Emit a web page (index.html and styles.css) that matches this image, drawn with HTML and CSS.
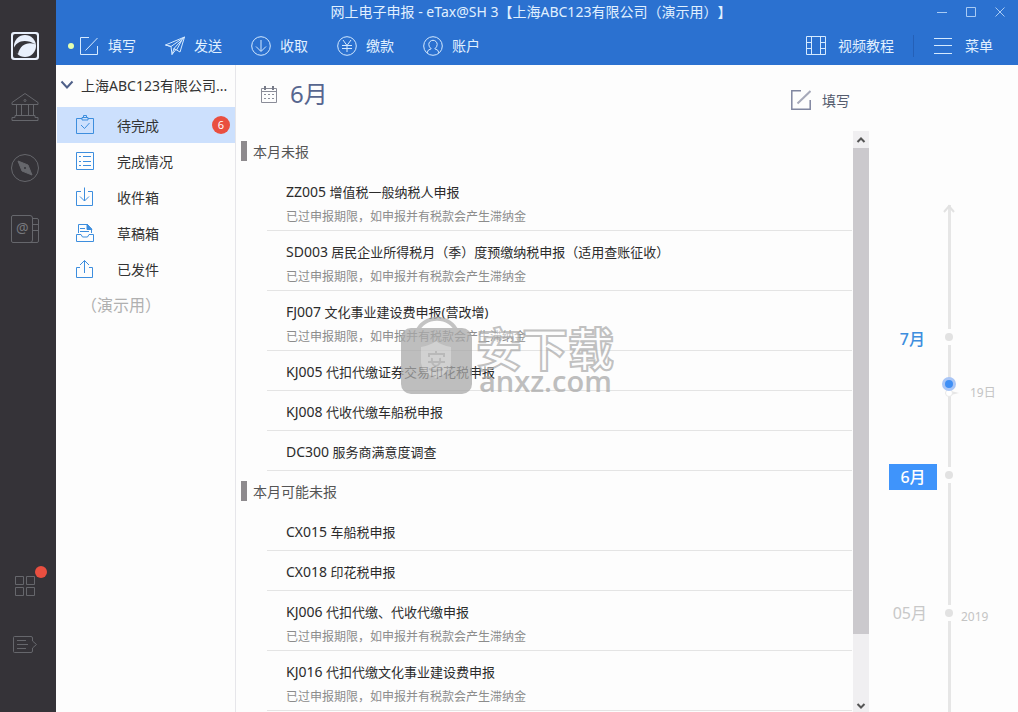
FILE: index.html
```html
<!DOCTYPE html>
<html lang="zh-CN">
<head>
<meta charset="utf-8">
<title>网上电子申报 - eTax@SH 3</title>
<link rel="stylesheet" href="styles.css">
</head>
<body>
<div class="app">
  <nav class="rail" aria-label="主导航">
    <button class="rail-btn" aria-label="首页"><svg width="28" height="28" viewBox="0 0 28 28"><rect width="28" height="28" rx="3" fill="#e9f0fc"/><rect x="2" y="2" width="24" height="24" rx="2" fill="#35343a"/><circle cx="14" cy="14" r="11" fill="#e9f0fc"/><path d="M2.500 17C5 9 14 6 25 12.500C17 9.500 9.500 12 7 22C5 21 4 20 2.500 17Z" fill="#35343a"/></svg></button>
    <button class="rail-btn" aria-label="税务局"><svg class="line" width="28" height="28" viewBox="0 0 28 28"><path d="M1 9.500L14 .5L27 9.500V11.500H1ZM5.500 12V22M10.500 12V22M17.500 12V22M22.500 12V22M4 22.500H24V24.500H27V27.500H1V24.500H4Z"/><circle cx="14" cy="7.500" r="1"/></svg></button>
    <button class="rail-btn" aria-label="指南"><svg class="line" width="28" height="28" viewBox="0 0 28 28"><circle cx="14" cy="14" r="13.500"/><path d="M7 7L17 11L21 21L11 17Z" class="solid"/><circle cx="14" cy="14" r="1" fill="#353338" stroke="none"/></svg></button>
    <button class="rail-btn" aria-label="通讯录"><svg class="line" width="28" height="28" viewBox="0 0 28 28"><path d="M2 .5H19Q21.500 .5 21.500 3V25Q21.500 27.500 19 27.500H2Q.5 27.500 .5 26V2Q.5 .5 2 .5ZM19 27.500H26Q27.500 27.500 27.500 26V5Q27.500 3.500 26 3.500H21.500M21.500 9.500H27.500M21.500 15.500H27.500"/><text x="5" y="18" class="at">@</text></svg></button>
    <div class="rail-foot">
      <button class="rail-btn" aria-label="应用"><svg class="line" width="28" height="28" viewBox="0 0 28 28"><path d="M4.500 4.500H12.500V12.500H4.500ZM15.500 4.500H23.500V12.500H15.500ZM4.500 15.500H12.500V23.500H4.500ZM15.500 15.500H23.500V23.500H15.500Z"/></svg><span class="rail-dot"></span></button>
      <button class="rail-btn" aria-label="反馈"><svg class="line" width="28" height="28" viewBox="0 0 28 28"><path d="M3.500 6.500H20Q21.500 6.500 21.500 8V11L25.500 14.500L21.500 18V21Q21.500 22.500 20 22.500H3.500Q2.500 22.500 2.500 21.500V7.500Q2.500 6.500 3.500 6.500ZM6 10.500H15M6 14.500H17M6 18.500H15"/></svg></button>
    </div>
  </nav>

  <div class="window">
    <header class="header">
      <div class="titlebar">
        <h1 class="title">网上电子申报 - eTax@SH 3【上海ABC123有限公司（演示用）】</h1>
        <div class="win-controls">
          <button aria-label="最小化"><svg width="12" height="12"><path d="M1 6.500H11"/></svg></button>
          <button aria-label="最大化"><svg width="12" height="12"><path d="M1.500 1.500H10.500V10.500H1.500Z"/></svg></button>
          <button aria-label="关闭"><svg width="12" height="12"><path d="M1.500 1.500L10.500 10.500M10.500 1.500L1.500 10.500"/></svg></button>
        </div>
      </div>
      <div class="toolbar">
        <span class="active-dot"></span>
        <div class="tools">
          <button class="tool"><svg width="20" height="20"><path d="M10 1.500H1.500V18.500H18.500V10M6.500 14.500L18.500 2"/></svg>填写</button>
          <button class="tool"><svg width="20" height="20"><path d="M.5 9L19.500 1L15 16L9 12.500L19.500 1L6 10.500ZM6 10.500L7 18.500L9 12.500L10.500 14L7 18.500M6 10.500L.5 9M11.500 14L17 4"/></svg>发送</button>
          <button class="tool"><svg width="20" height="20"><circle cx="10" cy="10" r="9.300"/><path d="M10 4V15M5 10.500L10 15.500L15 10.500"/></svg>收取</button>
          <button class="tool"><svg width="20" height="20"><circle cx="10" cy="10" r="9.300"/><path d="M6 4L10 9.500L14 4M5 9.500H15M5 12.500H15M10 9.500V16"/></svg>缴款</button>
          <button class="tool"><svg width="20" height="20"><circle cx="10" cy="10" r="9.300"/><path d="M4 17Q4.500 13.500 8.200 12.800Q5.800 11 5.800 8.500A4.200 4.200 0 0 1 14.200 8.500Q14.200 11 11.800 12.800Q15.500 13.500 16 17"/></svg>账户</button>
        </div>
        <div class="tools tools-right">
          <button class="tool"><svg width="20" height="20"><path d="M.5 .5H19.500V18.500H.5ZM5.500 .5V18.500M14.500 .5V18.500M.5 6.500H5.500M.5 12.500H5.500M14.500 6.500H19.500M14.500 12.500H19.500"/></svg>视频教程</button>
          <span class="divider"></span>
          <button class="tool"><svg width="20" height="20"><path d="M1 2.500H19M1 9.500H19M1 17.500H19"/></svg>菜单</button>
        </div>
      </div>
    </header>

    <div class="body">
      <aside class="sidebar">
        <button class="account"><svg width="14" height="10"><path d="M1.500 1.500L7 7.500L12.500 1.500" fill="none" stroke="#4f6089" stroke-width="2"/></svg><span class="account-name">上海ABC123有限公司...</span></button>
        <ul class="folders">
          <li><a class="folder selected" href="#todo"><svg width="18" height="20"><path d="M6 3.500H.5V18.500H17.500V3.500H12M6 2.500H12V5H6ZM7.500 2V.5H10.500V2M5 10L8.500 13.500L13.500 8"/></svg><span>待完成</span><span class="badge">6</span></a></li>
          <li><a class="folder" href="#status"><svg width="18" height="20"><path d="M.5 1.500H17.500V18.500H.5ZM7 5.500H15M7 10.500H15M7 14.500H15M3 5.500H5M3 10.500H5M3 14.500H5"/></svg><span>完成情况</span></a></li>
          <li><a class="folder" href="#inbox"><svg width="18" height="20"><path d="M5 4.500H.5V18.500H16.500V4.500H12M8.500 .5V14M4 9.500L8.500 14L13 9.500"/></svg><span>收件箱</span></a></li>
          <li><a class="folder" href="#drafts"><svg width="18" height="20"><path d="M2.500 10V1.500H11L15.500 6V10M4 5.500H9M4 8.500H13M.5 11.500H5L6.500 14H11.500L13 11.500H17.500V18.500H.5Z"/><path d="M11 1V6.500H16Z" fill="#3d8ede"/></svg><span>草稿箱</span></a></li>
          <li><a class="folder" href="#sent"><svg width="18" height="20"><path d="M4 8.500H.5V18.500H16.500V8.500H13M8.500 14V1.500M4 6L8.500 1.500L13 6"/></svg><span>已发件</span></a></li>
        </ul>
        <p class="demo">（演示用）</p>
      </aside>

      <main class="content">
        <div class="content-head">
          <svg width="18" height="18" viewBox="0 0 18 18"><path d="M1.500 3.500H16.500V17.500H1.500ZM1.500 6.500H16.500" fill="none" stroke="#8a8c98"/><path d="M5 1V5M13 1V5" stroke="#777b88" stroke-width="2"/><path d="M8 9.500H10M12 9.500H14M4 13.500H6M8 13.500H10M12 13.500H14M4 9.500H6" stroke="#8a8e9a"/></svg>
          <h2 class="month">6月</h2>
          <button class="fill"><svg width="20" height="20"><path d="M10 .8H.8V19.200H19.200V10" fill="none" stroke="#8086a0" stroke-width="1.500"/><path d="M6.500 13.500L19.500 1" stroke="#a6a9b9" stroke-width="2"/></svg>填写</button>
        </div>
        <div class="scroller">
          <div class="list">
            <h3 class="section">本月未报</h3>
            <ul class="rows">
              <li class="row"><p class="name"><span class="code">ZZ005</span> 增值税一般纳税人申报</p><p class="note">已过申报期限，如申报并有税款会产生滞纳金</p></li>
              <li class="row"><p class="name"><span class="code">SD003</span> 居民企业所得税月（季）度预缴纳税申报（适用查账征收）</p><p class="note">已过申报期限，如申报并有税款会产生滞纳金</p></li>
              <li class="row"><p class="name"><span class="code">FJ007</span> 文化事业建设费申报(营改增)</p><p class="note">已过申报期限，如申报并有税款会产生滞纳金</p></li>
              <li class="row"><p class="name"><span class="code">KJ005</span> 代扣代缴证券交易印花税申报</p></li>
              <li class="row"><p class="name"><span class="code">KJ008</span> 代收代缴车船税申报</p></li>
              <li class="row"><p class="name"><span class="code">DC300</span> 服务商满意度调查</p></li>
            </ul>
            <h3 class="section">本月可能未报</h3>
            <ul class="rows">
              <li class="row"><p class="name"><span class="code">CX015</span> 车船税申报</p></li>
              <li class="row"><p class="name"><span class="code">CX018</span> 印花税申报</p></li>
              <li class="row"><p class="name"><span class="code">KJ006</span> 代扣代缴、代收代缴申报</p><p class="note">已过申报期限，如申报并有税款会产生滞纳金</p></li>
              <li class="row"><p class="name"><span class="code">KJ016</span> 代扣代缴文化事业建设费申报</p><p class="note">已过申报期限，如申报并有税款会产生滞纳金</p></li>
            </ul>
          </div>
          <div class="scrollbar">
            <button aria-label="向上滚动"><svg width="10" height="8"><path d="M1.500 6L5 2.500L8.500 6"/></svg></button>
            <div class="track"><div class="thumb"></div></div>
            <button aria-label="向下滚动"><svg width="10" height="8"><path d="M1.500 2L5 5.500L8.500 2"/></svg></button>
          </div>
        </div>
        <div class="watermark">
          <svg width="72" height="80" viewBox="0 0 72 80"><path d="M16 17A21 19 0 0 1 56 17" fill="none" stroke="#b0b0b0" stroke-width="4"/><rect y="13" width="71" height="66" rx="10" fill="#a9a9a9"/><path d="M20 32Q30 30 35 26Q40 30 50 32V48Q49 58 35 63Q21 58 20 48Z" fill="#c3c3c3"/><path d="M35 36V39M28 42V39H43V42M27 47H44M31 43Q30 50 35 51Q40 50 39 43M28 54Q35 57 42 54" fill="none" stroke="#a3a3a3" stroke-width="2"/></svg>
          <div><p class="mark-cn">安下载</p><p class="mark-url">anxz.com</p></div>
        </div>
      </main>

      <aside class="timeline" aria-label="时间轴">
        <div class="period start"><svg class="arrow" width="14" height="10"><path d="M2 8L7 2L12 8" fill="none" stroke="#e2e2e2" stroke-width="2"/></svg></div>
        <div class="period"><span class="label next">7月</span><span class="axis"><i></i></span><svg class="pointer" width="14" height="8"><path d="M6 2L14 4L6 6Z" fill="#e6e6e6"/><circle cx="4" cy="4" r="3.500" fill="#fff" stroke="#e8e8e8"/></svg><span class="today"></span><span class="day">19日</span></div>
        <div class="period"><span class="label current">6月</span><span class="axis"><i></i></span></div>
        <div class="period"><span class="label past">05月</span><span class="axis"><i></i></span><span class="year">2019</span></div>
        <div class="period rest"><span class="axis"></span></div>
      </aside>
    </div>
  </div>
</div>
</body>
</html>
```
FILE: styles.css
```css
* { box-sizing: border-box; }
body, h1, h2, h3, p, ul { margin: 0; padding: 0; font-weight: 400; }
ul { list-style: none; }
body { font-family: "Noto Sans", "Noto Sans CJK SC", sans-serif; font-size: 14px; color: #333; text-spacing-trim: space-all; }
button { border: 0; padding: 0; background: none; font: inherit; color: inherit; }
a { color: inherit; text-decoration: none; }
svg { display: block; flex: none; }

.app { display: flex; height: 100vh; overflow: hidden; background: #fdfdfd; }

.rail { display: flex; flex-direction: column; gap: 33px; width: 56px; flex: none; padding: 32px 0 54px 11px; background: #353338; }
.rail-btn { position: relative; width: 28px; height: 28px; }
.rail-foot { display: flex; flex-direction: column; gap: 30px; margin-top: auto; }
.rail-dot { position: absolute; top: -6px; right: -8px; width: 12px; height: 12px; border-radius: 50%; background: #e94f40; }
.line { fill: none; stroke: #66676c; }
.line .solid { fill: #66676c; }
.line .at { font-family: "Noto Sans", sans-serif; font-size: 14px; fill: #77787d; stroke: none; }

.window { display: flex; flex-direction: column; flex: 1; min-width: 0; }
.header { display: flex; flex-direction: column; height: 65px; flex: none; background: #2b71d0; color: #e0f0ff; }
.header svg { fill: none; stroke: #d5eaff; }
.titlebar { display: grid; grid-template-columns: 1fr auto 1fr; height: 24px; align-items: center; padding-right: 12px; }
.title { grid-column: 2; font-size: 14px; line-height: 24px; }
.win-controls { display: flex; gap: 17px; justify-content: flex-end; }
.header .win-controls svg { stroke: #a9cbf4; }
.toolbar { display: flex; align-items: center; flex: 1; padding: 2px 25px 0 12px; }
.active-dot { width: 6px; height: 6px; margin-right: 5px; border-radius: 50%; background: #e4ffb0; }
.tools { display: flex; align-items: center; gap: 29px; }
.tool { display: flex; align-items: center; gap: 9px; line-height: 20px; }
.tools-right { margin-left: auto; gap: 19px; }
.tools-right .tool { gap: 12px; }
.divider { width: 1px; height: 22px; background: #2460b8; }

.body { display: flex; flex: 1; min-height: 0; }
.sidebar { width: 180px; flex: none; padding-left: 1px; border-right: 1px solid #e6e6ea; }
.account { display: flex; align-items: center; gap: 7px; width: 100%; height: 42px; padding: 0 4px 2px 3px; text-align: left; }
.account-name { white-space: nowrap; }
.folder { display: flex; align-items: center; gap: 23px; height: 36px; padding: 0 5px 0 19px; }
.folder svg { fill: none; stroke: #3d8ede; }
.selected { background: #cce0fd; }
.badge { width: 18px; height: 18px; margin-left: auto; border-radius: 50%; background: #e94f40; color: #fff; font-size: 11px; line-height: 18px; text-align: center; }
.demo { padding-left: 24px; font-size: 16px; line-height: 36px; color: #b0b0b0; }

.content { position: relative; display: flex; flex-direction: column; flex: 1; min-width: 0; }
.content-head { display: flex; align-items: center; height: 66px; flex: none; padding: 0 19px 8px 24px; }
.month { margin-left: 12px; font-size: 24px; line-height: 32px; color: #57668f; }
.fill { display: flex; align-items: center; gap: 11px; margin: 12px 0 0 auto; color: #555c6e; }
.scroller { display: flex; flex: 1; min-height: 0; }
.list { flex: 1; overflow: hidden; padding-left: 5px; }
.section { display: flex; align-items: center; gap: 6px; height: 40px; font-size: 14px; color: #555; }
.section::before { content: ""; width: 6px; height: 20px; background: #8d8a8d; }
.rows { padding: 0 1px 0 26px; }
.row { height: 40px; padding: 11px 0 0 19px; border-bottom: 1px solid #e4e4e4; }
.row:has(.note) { height: 60px; }
.name { font-size: 13px; line-height: 20px; white-space: nowrap; color: #2b2b2b; }
.code { font-size: 14px; }
.note { padding-top: 7px; font-size: 12px; line-height: 16px; color: #8c8c8c; }
.scrollbar { display: flex; flex-direction: column; width: 16px; flex: none; background: #f0eff1; }
.scrollbar button { display: flex; align-items: center; justify-content: center; height: 17px; flex: none; }
.scrollbar button:last-child { height: 12px; }
.scrollbar svg { fill: none; stroke: #555; stroke-width: 2; }
.track { flex: 1; }
.thumb { height: 88%; background: #cbc9cd; }

.watermark { position: absolute; top: 250px; left: 165px; display: flex; gap: 3px; opacity: .75; pointer-events: none; }
.mark-cn { padding-top: 12px; font-size: 46px; line-height: 42px; font-weight: 700; color: rgba(255, 255, 255, .6); -webkit-text-stroke: 2px #adadad; }
.mark-url { padding-left: 3px; font-family: "Open Sans", sans-serif; font-size: 29px; line-height: 24px; font-weight: 600; color: #a9a9a9; }

.timeline { display: flex; flex-direction: column; width: 149px; flex: none; padding-top: 140px; }
.period { position: relative; display: grid; grid-template-columns: 68px 24px 1fr; align-items: center; height: 138px; flex: none; }
.period.start { height: 63px; }
.period.rest { flex: 1; height: auto; }
.start::before, .axis::before, .axis::after { content: ""; width: 3px; background: #e6e6e6; }
.start::before { grid-column: 2; height: 100%; justify-self: center; }
.arrow { position: absolute; left: 73px; top: -1px; }
.axis { grid-column: 2; display: flex; flex-direction: column; align-items: center; gap: 4px; height: 100%; }
.axis::before, .axis::after { flex: 1; }
.axis i { width: 8px; height: 8px; border-radius: 50%; background: #e2e2e2; }
.rest .axis { gap: 0; }
.label { grid-column: 1; margin-top: 4px; padding-right: 10px; font-size: 16px; line-height: 26px; text-align: right; white-space: nowrap; }
.next { padding-right: 12px; font-weight: 500; color: #3d8ede; }
.current { margin-left: 20px; padding: 0; background: #3f94fb; color: #fff; font-weight: 500; text-align: center; }
.past { margin-top: 0; color: #c8c8c8; }
.today { position: absolute; left: 73px; top: 109px; width: 14px; height: 14px; border: 3px solid #aac6f6; border-radius: 50%; background: #3f8ff5; }
.pointer { position: absolute; left: 76px; top: 121px; }
.day { position: absolute; left: 101px; top: 117px; font-size: 12px; line-height: 16px; color: #c4c4c4; }
.year { padding-top: 7px; font-size: 12px; line-height: 16px; color: #c4c4c4; }
```
